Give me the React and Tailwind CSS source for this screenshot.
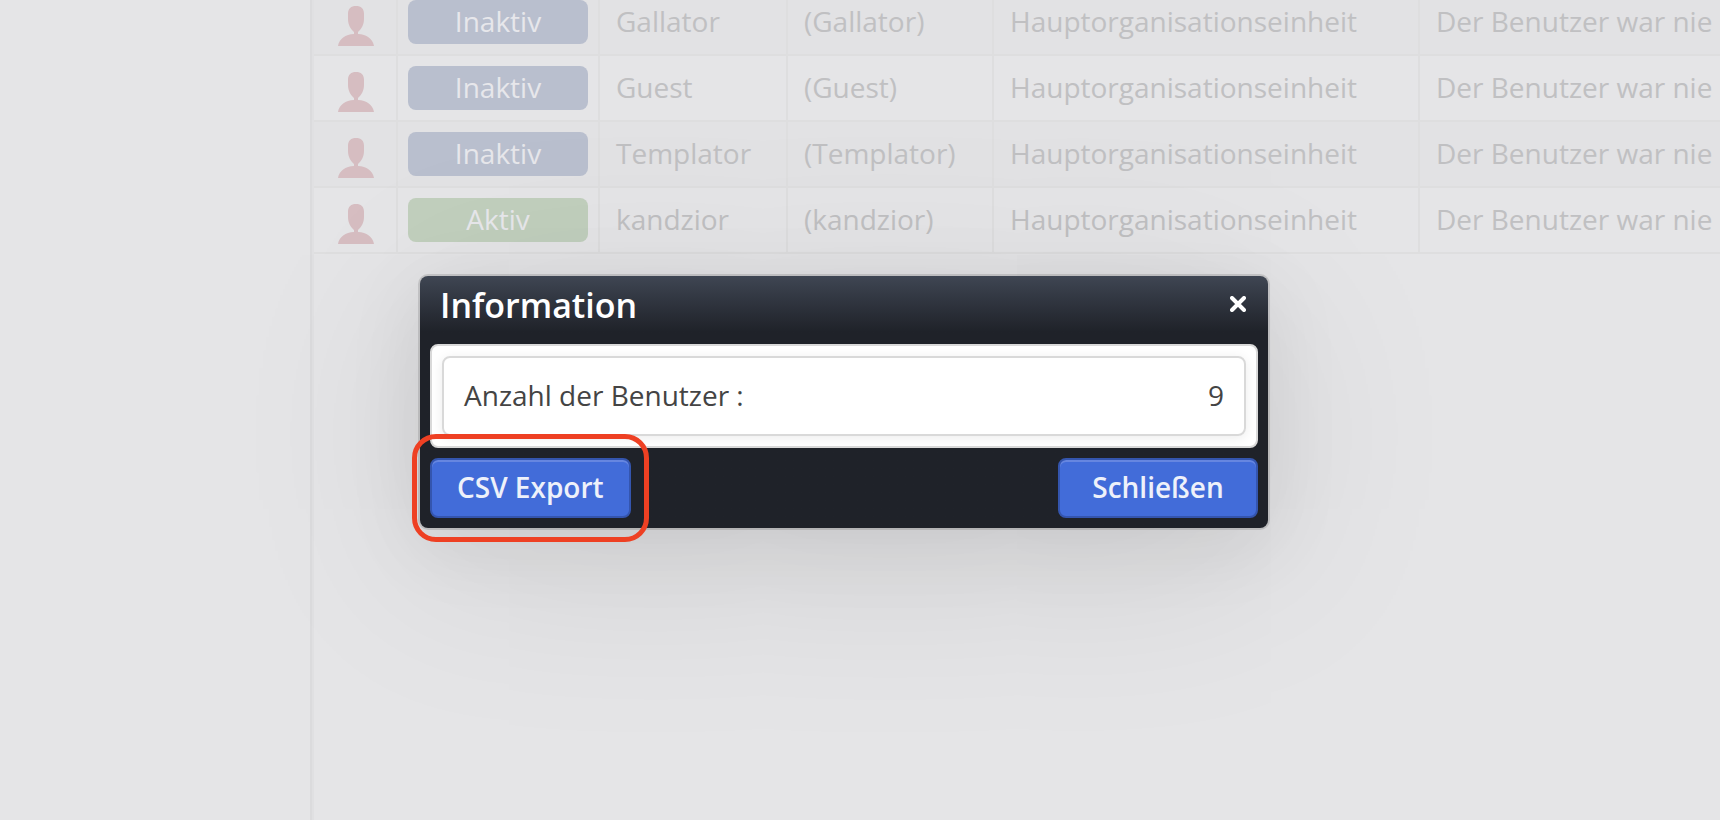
import { useState } from "react";

const USERS = [
  { name: "Gallator", login: "(Gallator)", active: false },
  { name: "Guest", login: "(Guest)", active: false },
  { name: "Templator", login: "(Templator)", active: false },
  { name: "kandzior", login: "(kandzior)", active: true },
];

const ORG_UNIT = "Hauptorganisationseinheit";
const LAST_LOGIN = "Der Benutzer war nie";

function UserIcon() {
  return (
    <svg width="36" height="40" viewBox="0 0 36 40" fill="currentColor" className="mx-auto text-[#d6bdc1]" aria-hidden="true">
      <path d="M18 0C23 0 26 2.500 26 8V13C26 18.500 23.500 23 20 26V28C28.500 28.300 35 33 36 40H0C1 33 7.500 28.300 16 28V26C12.500 23 10 18.500 10 13V8C10 2.500 13 0 18 0Z" />
    </svg>
  );
}

function StatusBadge({ active }) {
  return (
    <span
      className={`block h-11 rounded-lg text-center leading-[42px] text-[#e7e7eb] ${
        active ? "bg-[#c1cfbd]" : "bg-[#b9bfce]"
      }`}
    >
      {active ? "Aktiv" : "Inaktiv"}
    </span>
  );
}

function UserTable() {
  return (
    <table className="-mt-[10px] w-full table-fixed border-separate border-spacing-0 text-[28px] leading-[40px] text-[#c0c0c2]">
      <colgroup>
        <col className="w-[84px]" />
        <col className="w-[202px]" />
        <col className="w-[188px]" />
        <col className="w-[206px]" />
        <col className="w-[426px]" />
        <col />
      </colgroup>
      <tbody>
        {USERS.map((user) => (
          <tr key={user.name} className="h-[66px] odd:bg-[#e2e2e4] [&>td]:border-b-2 [&>td]:border-[#dededf] [&>td:not(:last-child)]:border-r-2">
            <td className="pt-2 pl-[2px]">
              <UserIcon />
            </td>
            <td className="px-[10px]">
              <StatusBadge active={user.active} />
            </td>
            <td className="pb-[2px] pl-4">{user.name}</td>
            <td className="pb-[2px] pl-4">{user.login}</td>
            <td className="pb-[2px] pl-4">{ORG_UNIT}</td>
            <td className="overflow-hidden pb-[2px] pl-4 whitespace-nowrap">{LAST_LOGIN}</td>
          </tr>
        ))}
      </tbody>
    </table>
  );
}

function DialogButton({ children, ...props }) {
  return (
    <button
      type="button"
      className="h-[60px] min-w-[200px] cursor-pointer rounded-lg border-2 border-[#3455ae] bg-[#426cd9] px-[25px] pb-[2px] text-[28px] leading-[40px] font-semibold text-[#eef1fa] shadow-[inset_0_2px_0_#6686e0]"
      {...props}
    >
      {children}
    </button>
  );
}

function InfoDialog({ count, onClose }) {
  return (
    <div className="absolute inset-0 flex items-center justify-center pr-8 pb-4">
      <section
        role="dialog"
        aria-labelledby="dialog-title"
        className="w-full max-w-[848px] rounded-lg bg-[#1f2229] bg-linear-to-b from-[#3f4653] to-[#1f2229] to-[56px] px-[10px] pb-[10px] shadow-[0_0_0_2px_rgba(0,0,0,0.12),0_16px_80px_rgba(0,0,0,0.08),0_32px_200px_rgba(0,0,0,0.1)]"
      >
        <header className="flex h-[68px] items-start justify-between pt-2 pr-3 pl-[10px] text-white">
          <h2 id="dialog-title" className="text-[34px] leading-[42px] font-semibold">
            Information
          </h2>
          <button type="button" aria-label="Dialog beenden" onClick={onClose} className="mt-3 cursor-pointer">
            <svg width="16" height="16" viewBox="0 0 16 16" fill="none" stroke="currentColor" strokeWidth="4" strokeLinecap="round">
              <path d="M2 2L14 14M14 2L2 14" />
            </svg>
          </button>
        </header>

        <div className="rounded-lg border-2 border-[#d9d9d9] bg-white p-[10px]">
          <dl className="flex h-20 items-center justify-between rounded-lg border-2 border-[#d9d9d9] px-5 pb-[2px] text-[28px] leading-[40px] text-[#444] shadow-[0_2px_12px_rgba(0,0,0,0.08)]">
            <dt>Anzahl der Benutzer :</dt>
            <dd>{count}</dd>
          </dl>
        </div>

        <footer className="mt-[10px] flex justify-between">
          <div className="relative">
            <DialogButton>CSV Export</DialogButton>
            <span className="pointer-events-none absolute -inset-x-[18px] -inset-y-6 rounded-3xl border-[5px] border-[#ee4023]" />
          </div>
          <DialogButton onClick={onClose}>Schließen</DialogButton>
        </footer>
      </section>
    </div>
  );
}

export default function App() {
  const [open, setOpen] = useState(true);

  return (
    <div className="relative flex min-h-screen overflow-hidden bg-[#e5e5e7] font-['Open_Sans','Noto_Sans',sans-serif]">
      <aside className="w-[312px] shrink-0 border-r-2 border-[#dbdbdd]" />
      <main className="min-w-0 flex-1 border-l-2 border-[#e0e0e2]">
        <UserTable />
      </main>
      {open && <InfoDialog count={9} onClose={() => setOpen(false)} />}
    </div>
  );
}
